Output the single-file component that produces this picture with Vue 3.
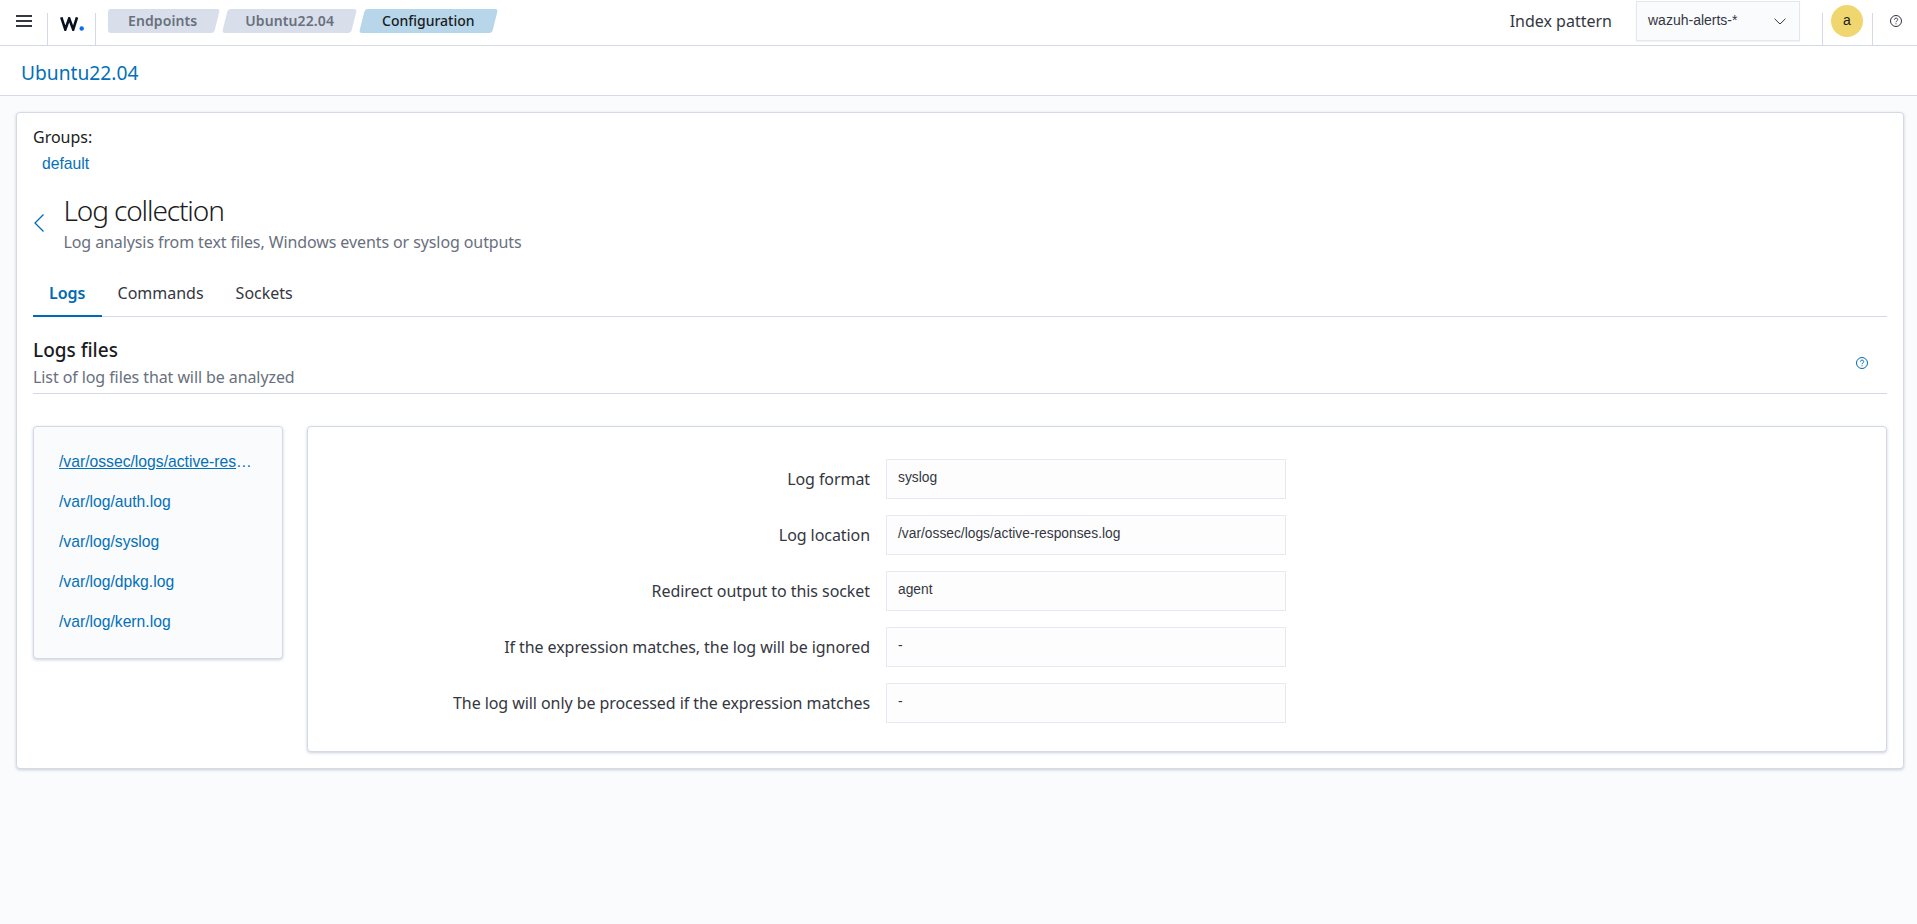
<script setup>
const crumbs = [
  { label: 'Endpoints', cls: 'first' },
  { label: 'Ubuntu22.04', cls: '' },
  { label: 'Configuration', cls: 'active' },
]
const tabs = [
  { label: 'Logs', active: true },
  { label: 'Commands', active: false },
  { label: 'Sockets', active: false },
]
const files = [
  { label: '/var/ossec/logs/active-responses.log', active: true },
  { label: '/var/log/auth.log', active: false },
  { label: '/var/log/syslog', active: false },
  { label: '/var/log/dpkg.log', active: false },
  { label: '/var/log/kern.log', active: false },
]
const fields = [
  { label: 'Log format', value: 'syslog' },
  { label: 'Log location', value: '/var/ossec/logs/active-responses.log' },
  { label: 'Redirect output to this socket', value: 'agent' },
  { label: 'If the expression matches, the log will be ignored', value: '-' },
  { label: 'The log will only be processed if the expression matches', value: '-' },
]
</script>

<template>
  <div class="page">
    <header class="topbar">
      <button class="menu-btn" aria-label="Menu">
        <svg width="16" height="12" viewBox="0 0 16 12"><path d="M0 1h16M0 6h16M0 11h16" stroke="#343741" stroke-width="2" fill="none" /></svg>
      </button>
      <div class="logo">
        <svg width="25" height="14" viewBox="0 0 25 14">
          <path d="M1.300.3 5.300 12.500 9.200 1.500 13.200 12.500 17 .3" stroke="#07101f" stroke-width="2.600" fill="none" stroke-linejoin="miter" />
          <circle cx="21.700" cy="11.500" r="2.200" fill="#0a6cf5" />
        </svg>
      </div>
      <nav class="crumbs">
        <span v-for="c in crumbs" :key="c.label" class="crumb" :class="c.cls">{{ c.label }}</span>
      </nav>
      <div class="top-right">
        <span class="index-label">Index pattern</span>
        <div class="index-select">
          <span>wazuh-alerts-*</span>
          <svg width="12" height="7" viewBox="0 0 12 7"><path d="M.5.7 6 6 11.500.7" stroke="#343741" stroke-width="1" fill="none" /></svg>
        </div>
        <div class="avatar-cell"><span class="avatar">a</span></div>
        <div class="help-cell">
          <svg width="12" height="12" viewBox="0 0 12 12" fill="none" stroke="#343741">
            <circle cx="6" cy="6" r="5.500" />
            <path d="M4.400 4.700c0-2.100 3.300-2.100 3.300-.1 0 1.300-1.700 1.300-1.700 2.600" />
            <path d="M6 8.300v1" />
          </svg>
        </div>
      </div>
    </header>

    <div class="titlebar"><a class="agent-name">Ubuntu22.04</a></div>

    <main class="panel">
      <div class="groups-label">Groups:</div>
      <a class="group-link">default</a>

      <div class="heading">
        <svg class="back" width="10" height="18" viewBox="0 0 10 18"><path d="M9.500.5 1 9l8.500 8.500" stroke="#006bb4" stroke-width="1.300" fill="none" /></svg>
        <div>
          <h1>Log collection</h1>
          <p>Log analysis from text files, Windows events or syslog outputs</p>
        </div>
      </div>

      <div class="tabs">
        <span v-for="t in tabs" :key="t.label" class="tab" :class="{ active: t.active }">{{ t.label }}</span>
      </div>

      <section class="section-head">
        <div>
          <h2>Logs files</h2>
          <p>List of log files that will be analyzed</p>
        </div>
        <svg width="12" height="12" viewBox="0 0 12 12" fill="none" stroke="#006bb4">
          <circle cx="6" cy="6" r="5.500" />
          <path d="M4.400 4.700c0-2.100 3.300-2.100 3.300-.1 0 1.300-1.700 1.300-1.700 2.600" />
          <path d="M6 8.300v1" />
        </svg>
      </section>

      <div class="content">
        <ul class="file-list">
          <li v-for="f in files" :key="f.label" :class="{ active: f.active }"><span>{{ f.label }}</span></li>
        </ul>
        <div class="detail">
          <template v-for="f in fields" :key="f.label">
            <label>{{ f.label }}</label>
            <div class="field">{{ f.value }}</div>
          </template>
        </div>
      </div>
    </main>
  </div>
</template>

<style>
html, body { margin: 0; background: #fafbfd; }
</style>

<style scoped>
.page {
  min-height: 924px;
  background: #fafbfd;
  color: #343741;
  font-family: "Noto Sans", sans-serif;
  font-size: 16px;
  overflow: hidden;
}
.topbar {
  display: flex;
  align-items: flex-start;
  height: 45px;
  background: #fff;
  border-bottom: 1px solid #d3dae6;
}
.menu-btn {
  width: 48px;
  height: 32px;
  margin-top: 13px;
  padding: 2px 0 0;
  border: 0;
  border-right: 1px solid #d3dae6;
  background: none;
  box-sizing: border-box;
  display: flex;
  align-items: flex-start;
  justify-content: center;
}
.logo {
  width: 48px;
  height: 32px;
  margin-top: 13px;
  padding: 1px 0 0 12px;
  border-right: 1px solid #d3dae6;
  box-sizing: border-box;
}
.crumbs {
  display: flex;
  gap: 8px;
  margin: 9px 0 0 12px;
  height: 24px;
}
.crumb {
  position: relative;
  z-index: 0;
  padding: 0 20px;
  line-height: 24px;
  font-weight: 600;
  font-size: 14px;
  letter-spacing: 0.1px;
  color: #69707d;
}
.crumb::before {
  content: "";
  position: absolute;
  inset: 0;
  z-index: -1;
  background: #d8deea;
  border-radius: 3px;
  transform: skewX(-14deg);
}
.crumb.first::before { left: 20px; }
.crumb.first::after {
  content: "";
  position: absolute;
  left: 0;
  top: 0;
  bottom: 0;
  width: 30px;
  z-index: -1;
  background: #d8deea;
  border-radius: 3px;
}
.crumb.active { color: #1a1c21; font-weight: 500; letter-spacing: 0; }
.crumb.active::before { background: #b7d6ea; }
.top-right {
  margin-left: auto;
  display: flex;
  align-items: flex-start;
}
.index-label {
  font-size: 16px;
  line-height: 43px;
  margin-right: 24px;
}
.index-select {
  width: 164px;
  height: 40px;
  margin-top: 1px;
  box-sizing: border-box;
  border: 1px solid #e3e8f0;
  background: #fafbfd;
  display: flex;
  align-items: center;
  justify-content: space-between;
  padding: 0 13px 2px 11px;
  font-family: "Liberation Sans", sans-serif;
  font-size: 14px;
  color: #343741;
  box-shadow: 0 1px 1px rgba(152, 162, 179, 0.12);
}
.index-select svg { margin-top: 3px; }
.avatar-cell {
  width: 51px;
  height: 32px;
  margin: 13px 0 0 22px;
  box-sizing: border-box;
  border-left: 1px solid #d3dae6;
  border-right: 1px solid #d3dae6;
  position: relative;
}
.avatar {
  position: absolute;
  left: 8px;
  top: -8px;
  width: 32px;
  height: 32px;
  border-radius: 50%;
  background: #f0d66e;
  color: #1a1c21;
  text-align: center;
  line-height: 30px;
  font-family: "Liberation Sans", sans-serif;
  font-size: 14px;
}
.help-cell {
  padding: 15px 15px 0 17px;
  line-height: 0;
}
.titlebar {
  height: 50px;
  background: #fff;
  border-bottom: 1px solid #d3dae6;
  padding-left: 21px;
  box-sizing: border-box;
  line-height: 54px;
}
.agent-name {
  font-size: 19.200px;
  color: #0470b8;
}
.panel {
  margin: 16px 13px 0 16px;
  background: #fff;
  border: 1px solid #d3dae6;
  border-radius: 4px;
  box-shadow: 0 1px 3px rgba(152, 162, 179, 0.5);
  padding: 14px 16px 16px;
  height: 657px;
  box-sizing: border-box;
}
.groups-label { line-height: 20px; color: #1a1c21; }
.group-link {
  display: block;
  margin: 7px 0 0 9px;
  font-family: "Liberation Sans", sans-serif;
  font-size: 15.700px;
  color: #0470b8;
  line-height: 20px;
}
.heading {
  display: flex;
  align-items: center;
  margin-top: 18px;
}
.back { margin: 0 19.500px 0 1px; flex: none; }
h1 {
  margin: 0;
  font-size: 28px;
  font-weight: 300;
  letter-spacing: -0.04em;
  line-height: 36px;
  color: #1a1c21;
}
.heading p {
  margin: 2px 0 0;
  font-size: 16px;
  line-height: 24px;
  color: #69707d;
  letter-spacing: -0.1px;
}
.tabs {
  display: flex;
  align-items: flex-start;
  height: 46px;
  margin-top: 16px;
  border-bottom: 1px solid #d3dae6;
}
.tab {
  padding: 0 16px;
  line-height: 46px;
  height: 46px;
  box-sizing: border-box;
  color: #343741;
}
.tab.active {
  color: #006bb4;
  font-weight: 600;
  border-bottom: 2px solid #006bb4;
  height: 47px;
}
.section-head {
  display: flex;
  justify-content: space-between;
  align-items: center;
  margin-top: 20px;
  padding: 0 19px 5px 0;
  border-bottom: 1px solid #d3dae6;
}
h2 {
  margin: 0;
  font-size: 19px;
  font-weight: 500;
  line-height: 26px;
  color: #1a1c21;
}
.section-head p {
  margin: 3px 0 0;
  font-size: 16px;
  line-height: 22px;
  color: #69707d;
  letter-spacing: -0.09px;
}
.content {
  display: flex;
  align-items: flex-start;
  gap: 24px;
  margin-top: 32px;
}
.file-list {
  width: 250px;
  height: 233px;
  flex: none;
  box-sizing: border-box;
  margin: 0;
  list-style: none;
  padding: 15px 25px 16px 25px;
  background: #fafbfd;
  border: 1px solid #d3dae6;
  border-radius: 4px;
  box-shadow: 0 1px 3px rgba(152, 162, 179, 0.5);
  font-family: "Liberation Sans", sans-serif;
  font-size: 15.700px;
  color: #0470b8;
}
.file-list li {
  height: 40px;
  line-height: 40px;
  white-space: nowrap;
  overflow: hidden;
  text-overflow: ellipsis;
}
.file-list li.active span { text-decoration: underline; }
.detail {
  flex: 1;
  height: 326px;
  box-sizing: border-box;
  background: #fff;
  border: 1px solid #d3dae6;
  border-radius: 4px;
  box-shadow: 0 1px 3px rgba(152, 162, 179, 0.5);
  padding: 32px 0 0;
  display: grid;
  grid-template-columns: 562px 400px;
  grid-auto-rows: 40px;
  column-gap: 16px;
  row-gap: 16px;
  align-content: start;
}
.detail label {
  text-align: right;
  line-height: 40px;
  color: #343741;
  letter-spacing: -0.07px;
}
.field {
  box-sizing: border-box;
  height: 40px;
  padding: 0 11px;
  border: 1px solid #e6e8f2;
  background: #fdfdfe;
  font-family: "Liberation Sans", sans-serif;
  font-size: 13.800px;
  line-height: 36px;
  color: #343741;
}
</style>
